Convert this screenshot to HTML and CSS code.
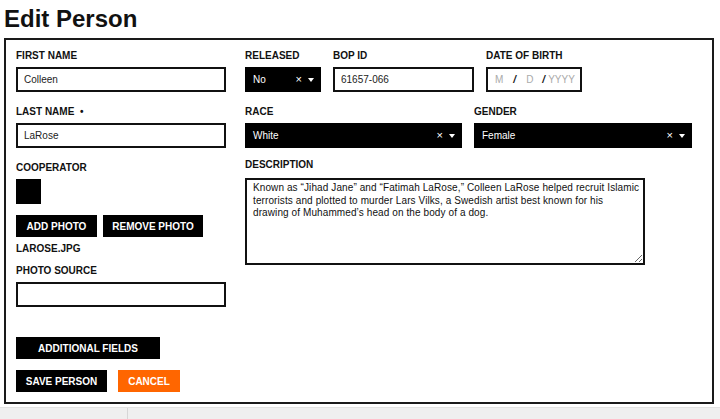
FILE: index.html
```html
<!DOCTYPE html>
<html lang="en">
<head>
<meta charset="utf-8">
<title>Edit Person</title>
<link rel="stylesheet" href="styles.css">
</head>
<body>
<h1 class="title">Edit Person</h1>
<form class="panel">
  <div class="col-left">
    <div class="field">
      <label class="label">FIRST NAME</label>
      <input class="input" type="text" value="Colleen">
    </div>
    <div class="field">
      <label class="label">LAST NAME &nbsp;•</label>
      <input class="input" type="text" value="LaRose">
    </div>
    <div class="field field-coop">
      <label class="label">COOPERATOR</label>
      <span class="checkbox"></span>
    </div>
    <div class="btn-row">
      <button type="button" class="btn btn-photo">ADD PHOTO</button>
      <button type="button" class="btn btn-photo">REMOVE PHOTO</button>
    </div>
    <div class="filename">LAROSE.JPG</div>
    <div class="field field-source">
      <label class="label">PHOTO SOURCE</label>
      <input class="input" type="text" value="">
    </div>
    <button type="button" class="btn btn-additional">ADDITIONAL FIELDS</button>
    <div class="btn-row btn-row-actions">
      <button type="button" class="btn btn-save">SAVE PERSON</button>
      <button type="button" class="btn btn-cancel">CANCEL</button>
    </div>
  </div>
  <div class="col-right">
    <div class="row row-1">
      <div class="field field-released">
        <label class="label">RELEASED</label>
        <div class="select"><span class="select-value">No</span><span class="select-clear">×</span><span class="select-caret"></span></div>
      </div>
      <div class="field field-bop">
        <label class="label">BOP ID</label>
        <input class="input" type="text" value="61657-066">
      </div>
      <div class="field field-dob">
        <label class="label">DATE OF BIRTH</label>
        <div class="input date"><span class="ph ph-m">M</span><span class="sep">/</span><span class="ph ph-d">D</span><span class="sep">/</span><span class="ph ph-y">YYYY</span></div>
      </div>
    </div>
    <div class="row row-2">
      <div class="field field-race">
        <label class="label">RACE</label>
        <div class="select"><span class="select-value">White</span><span class="select-clear">×</span><span class="select-caret"></span></div>
      </div>
      <div class="field field-gender">
        <label class="label">GENDER</label>
        <div class="select"><span class="select-value">Female</span><span class="select-clear">×</span><span class="select-caret"></span></div>
      </div>
    </div>
    <div class="field field-desc">
      <label class="label">DESCRIPTION</label>
      <textarea class="textarea">Known as “Jihad Jane” and “Fatimah LaRose,” Colleen LaRose helped recruit Islamic
terrorists and plotted to murder Lars Vilks, a Swedish artist best known for his
drawing of Muhammed’s head on the body of a dog.</textarea>
    </div>
  </div>
</form>
<div class="statusbar"><div class="status-cell"></div><div class="status-cell status-rest"></div></div>
</body>
</html>
```

FILE: styles.css
```css
* { box-sizing: border-box; }

html, body {
  margin: 0;
  padding: 0;
  background: #fff;
}

body {
  width: 720px;
  height: 419px;
  overflow: hidden;
  padding: 5px 0 0 4px;
  font-family: "Liberation Sans", Arial, Helvetica, sans-serif;
  color: #111;
  position: relative;
}

.title {
  margin: 0 0 5px 0;
  font-size: 24px;
  line-height: 28px;
  font-weight: bold;
  color: #111;
}

.panel {
  width: 710px;
  height: 366px;
  border: 2px solid #1a1a1a;
  padding: 10px 0 0 10px;
  display: flex;
  gap: 19px;
}

.col-left {
  width: 210px;
  display: flex;
  flex-direction: column;
  align-items: flex-start;
}

.col-right {
  width: 447px;
  display: flex;
  flex-direction: column;
}

.field {
  display: flex;
  flex-direction: column;
  gap: 5px;
  margin-bottom: 14px;
  width: 210px;
}

.label {
  font-size: 10px;
  line-height: 12px;
  font-weight: bold;
  color: #111;
  white-space: nowrap;
}

.input {
  height: 25px;
  width: 100%;
  border: 2px solid #111;
  background: #fff;
  padding: 0 6px;
  font-family: "Liberation Sans", Arial, sans-serif;
  font-size: 10px;
  color: #222;
  outline: none;
  margin: 0;
}

.field-coop {
  margin-bottom: 0;
}

.checkbox {
  display: block;
  width: 25px;
  height: 25px;
  background: #000;
}

.btn-row {
  display: flex;
  gap: 6px;
  margin-top: 11px;
}

.btn {
  height: 22px;
  border: none;
  margin: 0;
  background: #000;
  color: #fff;
  font-family: "Liberation Sans", Arial, sans-serif;
  font-size: 10px;
  font-weight: bold;
  padding: 0;
  cursor: pointer;
}

.btn-photo:first-child { width: 81px; }
.btn-photo:last-child { width: 100px; }

.filename {
  margin-top: 6px;
  font-size: 10px;
  line-height: 12px;
  font-weight: bold;
}

.field-source {
  margin-top: 10px;
  margin-bottom: 0;
}

.btn-additional {
  margin-top: 30px;
  width: 144px;
}

.btn-row-actions {
  gap: 11px;
}

.btn-save { width: 91px; }
.btn-cancel { width: 62px; background: #ff6600; }

.row {
  display: flex;
  gap: 12px;
}

.row .field { width: auto; }
.field-released { width: 76px !important; }
.field-bop { width: 141px !important; }
.field-dob { width: 96px !important; }
.field-race { width: 217px !important; }
.field-gender { width: 218px !important; }

.select {
  height: 25px;
  background: #000;
  color: #fff;
  display: flex;
  align-items: center;
  padding: 0 7px 0 8px;
  font-size: 10px;
}

.select-value {
  flex: 1;
  font-weight: 500;
}

.select-clear {
  font-size: 11px;
  margin-right: 6px;
  line-height: 1;
}

.select-caret {
  width: 0;
  height: 0;
  border-left: 3.5px solid transparent;
  border-right: 3.5px solid transparent;
  border-top: 4px solid #fff;
}

.date {
  display: flex;
  align-items: center;
  padding: 0 0 0 7px;
  overflow: hidden;
  white-space: nowrap;
}

.ph { color: #aaa; }
.sep { color: #111; font-weight: bold; font-style: italic; }
.ph-m { margin-right: 10px; }
.sep:nth-child(2) { margin-right: 10px; }
.ph-d { margin-right: 9px; }
.sep:nth-child(4) { margin-right: 3px; }

.field-desc {
  width: 400px;
  margin-top: -3px;
  margin-bottom: 0;
  gap: 7px;
}

.textarea {
  width: 400px;
  height: 87px;
  border: 2px solid #111;
  padding: 2px 2px 2px 6px;
  font-family: "Liberation Sans", Arial, sans-serif;
  font-size: 10px;
  letter-spacing: 0.1px;
  line-height: 12.5px;
  color: #111;
  resize: vertical;
  outline: none;
  margin: 0;
  overflow: hidden;
  white-space: pre;
}

.statusbar {
  position: absolute;
  left: 0;
  top: 407px;
  width: 720px;
  height: 12px;
  background: #efefef;
  border-top: 1px solid #e2e2e2;
  display: flex;
}

.status-cell {
  width: 128px;
  border-right: 1px solid #d6d6d6;
  height: 100%;
}

.status-rest {
  flex: 1;
  border-right: none;
}
```
